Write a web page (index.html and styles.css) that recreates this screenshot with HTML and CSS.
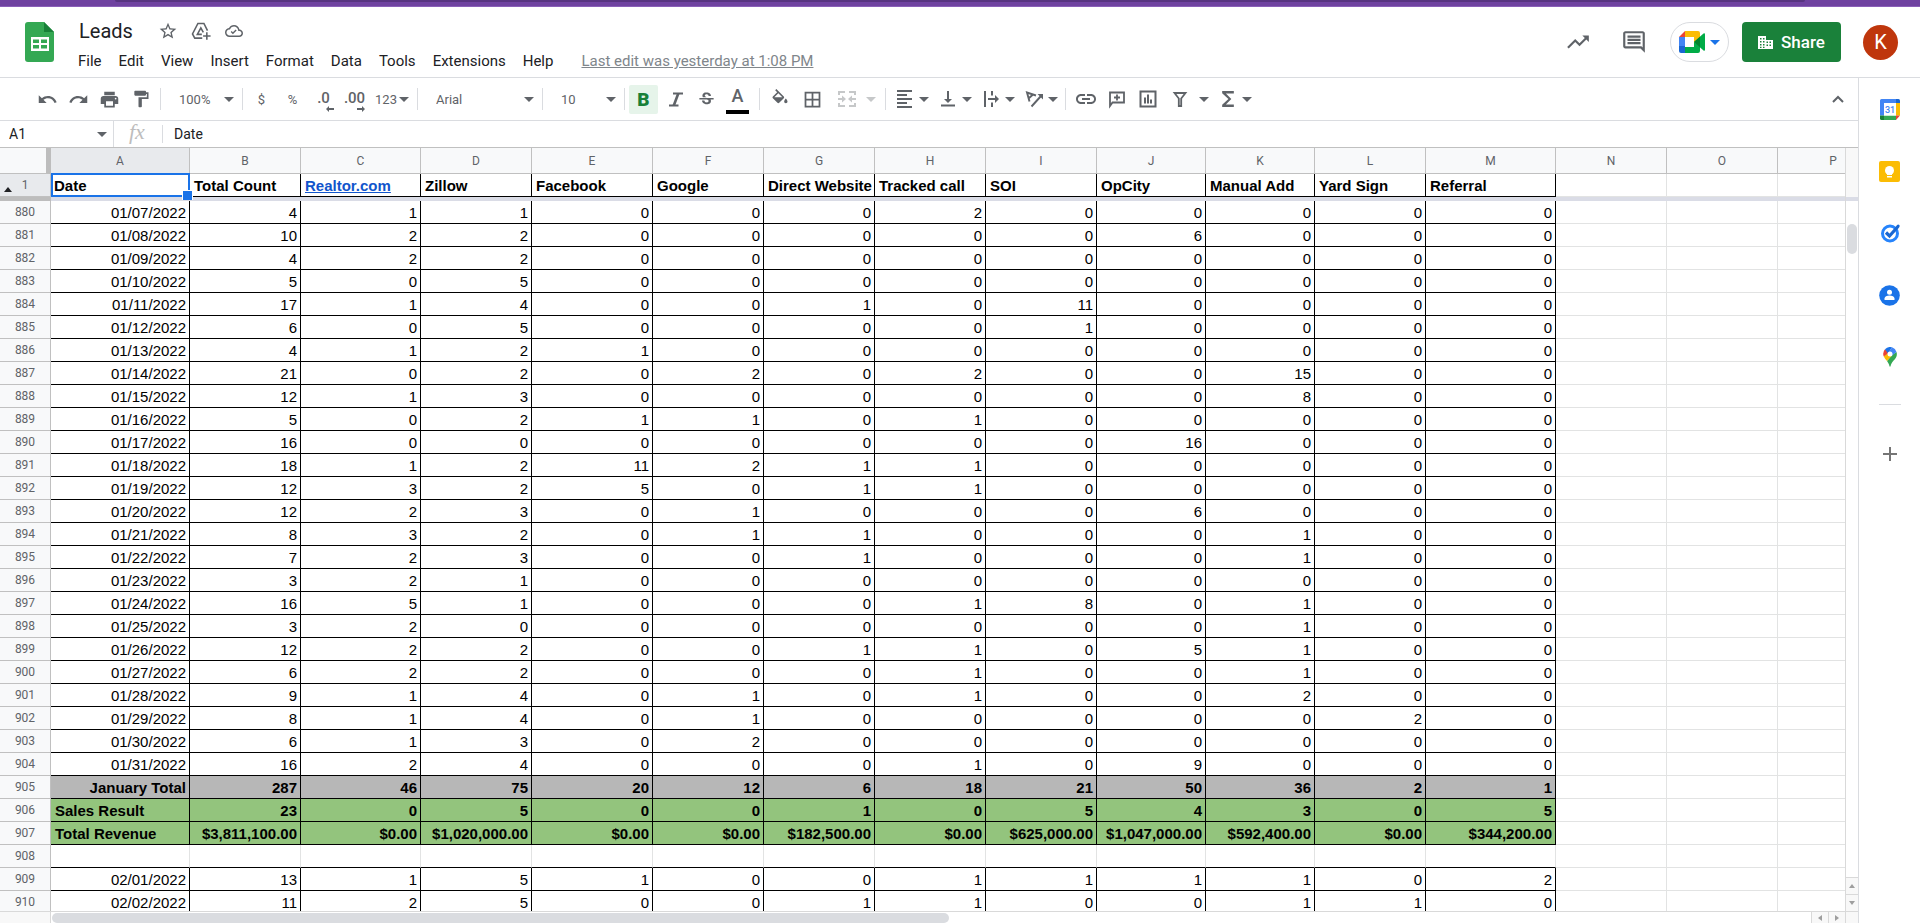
FILE: index.html
```html
<!DOCTYPE html>
<html lang="en">
<head>
<meta charset="utf-8">
<title>Leads</title>
<link rel="stylesheet" href="styles.css">
</head>
<body>
<svg class="defs" aria-hidden="true">
  <symbol id="caret" viewBox="0 0 10 5"><path d="M0 0h10L5 5z"/></symbol>
</svg>
<div class="window-strip"><div class="window-tab"></div></div>
<header class="header">
  <a class="logo" href="#" aria-label="Sheets home">
    <svg width="29" height="40" viewBox="0 0 29 40"><path fill="#34a853" d="M3 0h16l10 10v27a3 3 0 0 1-3 3H3a3 3 0 0 1-3-3V3a3 3 0 0 1 3-3z"/><path fill="#188038" d="M19 0l10 10H19z"/><path fill="#fff" fill-rule="evenodd" d="M6 15h18v14H6zM8 17.500v3.500h6v-3.500zM16 17.500v3.500h6v-3.500zM8 23v3.500h6V23zM16 23v3.500h6V23z"/></svg>
  </a>
  <div class="doc">
    <div class="doc-title">
      <h1>Leads</h1>
      <button class="doc-icon" aria-label="Star"><svg width="20" height="20" viewBox="0 0 24 24"><path d="M22 9.240l-7.190-.62L12 2 9.190 8.630 2 9.240l5.460 4.730L5.820 21 12 17.270 18.180 21l-1.630-7.030L22 9.240zM12 15.400l-3.760 2.270 1-4.280-3.320-2.880 4.380-.38L12 6.100l1.710 4.040 4.380.38-3.320 2.880 1 4.280L12 15.400z"/></svg></button>
      <button class="doc-icon" aria-label="Move"><svg width="20" height="20" viewBox="0 0 24 24" fill="none" stroke="#5f6368" stroke-width="1.900"><path d="M13.500 20.500H4.500L1.800 15.600 8.300 3h7.200l4.300 8.500"/><path d="M13 16H7.600l4.200-7.800 3 5.500M19 13.500v9M14.500 18h9"/></svg></button>
      <button class="doc-icon" aria-label="Saved to Drive"><svg width="18" height="18" viewBox="0 0 24 24"><path d="M19.350 10.040C18.670 6.590 15.640 4 12 4 9.110 4 6.600 5.640 5.350 8.040 2.340 8.360 0 10.910 0 14c0 3.310 2.690 6 6 6h13c2.760 0 5-2.240 5-5 0-2.640-2.050-4.780-4.650-4.960zM19 18H6c-2.210 0-4-1.790-4-4 0-2.050 1.530-3.760 3.560-3.970l1.070-.11.5-.95C8.080 7.140 9.940 6 12 6c2.620 0 4.880 1.860 5.390 4.430l.3 1.500 1.530.11c1.560.1 2.780 1.410 2.780 2.960 0 1.650-1.350 3-3 3zm-8.500-4.320l-1.600-1.600-1.300 1.300 2.900 2.900 5-5-1.300-1.300z"/></svg></button>
    </div>
    <nav class="menus" aria-label="Menu">
      <button>File</button><button>Edit</button><button>View</button><button>Insert</button><button>Format</button><button>Data</button><button>Tools</button><button>Extensions</button><button>Help</button>
      <a href="#">Last edit was yesterday at 1:08 PM</a>
    </nav>
  </div>
  <div class="actions">
    <button class="action-icon" aria-label="Activity"><svg width="26" height="26" viewBox="0 0 24 24"><path d="M16 6l2.290 2.290-4.880 4.880-4-4L2 16.590 3.410 18l6-6 4 4 6.300-6.290L22 12V6z"/></svg></button>
    <button class="action-icon" aria-label="Comments"><svg width="26" height="26" viewBox="0 0 24 24"><path d="M22 4c0-1.100-.9-2-2-2H4c-1.100 0-2 .9-2 2v12c0 1.100.9 2 2 2h14l4 4V4zM20 4v13.170L18.830 16H4V4zM6 12h12v2H6zm0-3h12v2H6zm0-3h12v2H6z"/></svg></button>
    <button class="meet" aria-label="Join a call">
      <svg width="26" height="22" viewBox="0 0 26 22"><path fill="#fff" d="M6 6h9v10H6z"/><path fill="#ea4335" d="M6 0v6H0z"/><path fill="#4285f4" d="M0 6h6v9H0z"/><path fill="#1967d2" d="M0 15h6v7H2a2 2 0 0 1-2-2z"/><path fill="#fbbc04" d="M6 0h13a2 2 0 0 1 2 2v5l-6 5V6H6z"/><path fill="#00ac47" d="M6 16h9v-5l6 4v5a2 2 0 0 1-2 2H6z"/><path fill="#00ac47" d="M15 11l9.500-8.500q1.500-.8 1.500.8v15.400q0 1.600-1.500.8z"/><path fill="#00832d" d="M15 11l6-5.300v10.600z"/></svg>
      <svg class="caret" width="10" height="5"><use href="#caret"/></svg>
    </button>
    <button class="share"><svg width="15" height="13" viewBox="0 0 15 13"><path fill="#fff" fill-rule="evenodd" d="M0 0h8v4h7v9H0zM2 2v1.500h1.500V2zM5 2v1.500h1.500V2zM2 5v1.500h1.500V5zM5 5v1.500h1.500V5zM2 8v1.500h1.500V8zM5 8v1.500h1.500V8zM8.500 5.500V7H10V5.500zM8.500 8.500V10H10V8.500zM11.500 5.500V7H13V5.500zM11.500 8.500V10H13V8.500zM2 10.700v1.300h1.500v-1.300zM5 10.700v1.300h1.500v-1.300z"/></svg>Share</button>
    <button class="avatar" aria-label="Account">K</button>
  </div>
</header>
<div class="body">
<main class="main">
  <div class="toolbar" role="toolbar" aria-label="Main">
    <div class="group first">
      <button class="tool" aria-label="Undo"><svg width="21" height="21" viewBox="0 0 24 24"><path d="M12.500 8c-2.650 0-5.050.99-6.900 2.600L2 7v9h9l-3.620-3.620c1.390-1.160 3.160-1.880 5.120-1.880 3.540 0 6.550 2.310 7.600 5.500l2.370-.78C21.080 11.030 17.150 8 12.500 8z"/></svg></button>
      <button class="tool" aria-label="Redo"><svg width="21" height="21" viewBox="0 0 24 24"><path d="M18.400 10.600C16.550 8.990 14.150 8 11.500 8c-4.650 0-8.580 3.030-9.960 7.220L3.900 16c1.050-3.190 4.050-5.500 7.600-5.500 1.950 0 3.730.72 5.120 1.880L13 16h9V7l-3.600 3.600z"/></svg></button>
      <button class="tool" aria-label="Print"><svg width="21" height="21" viewBox="0 0 24 24"><path d="M19 8H5c-1.660 0-3 1.340-3 3v6h4v4h12v-4h4v-6c0-1.660-1.340-3-3-3zm-3 11H8v-5h8v5zm3-7c-.55 0-1-.45-1-1s.45-1 1-1 1 .45 1 1-.45 1-1 1zm-1-9H6v4h12V3z"/></svg></button>
      <button class="tool" aria-label="Paint format"><svg width="20" height="20" viewBox="0 0 24 24"><path d="M18 4V3c0-.55-.45-1-1-1H5c-.55 0-1 .45-1 1v4c0 .55.45 1 1 1h12c.55 0 1-.45 1-1V6h1v4H9v11c0 .55.45 1 1 1h2c.55 0 1-.45 1-1v-9h8V4h-3z"/></svg></button>
    </div>
    <label class="pick pick-short"><select aria-label="Zoom"><option>100%</option></select><svg class="caret" width="10" height="5"><use href="#caret"/></svg></label>
    <div class="group">
      <button class="tool text">$</button>
      <button class="tool text">%</button>
      <button class="tool decimal">.0<svg width="8" height="6" viewBox="0 0 8 6"><path d="M0 3l3-3v2h5v2H3v2z"/></svg></button>
      <button class="tool decimal">.00<svg width="8" height="6" viewBox="0 0 8 6"><path d="M8 3L5 0v2H0v2h5v2z"/></svg></button>
      <button class="menu text">123<svg class="caret" width="10" height="5"><use href="#caret"/></svg></button>
    </div>
    <label class="pick pick-font"><select aria-label="Font"><option>Arial</option></select><svg class="caret" width="10" height="5"><use href="#caret"/></svg></label>
    <label class="pick pick-short"><select aria-label="Font size"><option>10</option></select><svg class="caret" width="10" height="5"><use href="#caret"/></svg></label>
    <div class="group styles">
      <button class="tool bold" aria-pressed="true">B</button>
      <button class="tool" aria-label="Italic"><svg width="20" height="20" viewBox="0 0 20 20" fill="none" stroke="#5f6368" stroke-width="2.200"><path d="M7 4.500h10M3 16.500h9.500"/><path stroke-width="2.600" d="M12.300 4.500l-4.500 12"/></svg></button>
      <button class="tool" aria-label="Strikethrough"><svg width="19" height="19" viewBox="0 0 24 24"><path d="M7.240 8.750c-.26-.48-.39-1.030-.39-1.670 0-.61.13-1.160.4-1.670.26-.5.63-.93 1.110-1.290.48-.35 1.050-.63 1.700-.83.66-.19 1.390-.29 2.180-.29.81 0 1.540.11 2.210.34.66.22 1.230.54 1.690.94.47.4.83.88 1.080 1.430.25.55.38 1.150.38 1.810h-3.010c0-.31-.05-.59-.15-.85-.09-.27-.24-.49-.44-.68-.2-.19-.45-.33-.75-.44-.3-.1-.66-.16-1.060-.16-.39 0-.74.04-1.030.13-.29.09-.53.21-.72.36-.19.16-.34.34-.44.55-.1.21-.15.43-.15.66 0 .48.25.88.74 1.210.38.25.77.48 1.410.7H7.390c-.05-.08-.11-.17-.15-.25zM21 12v-2H3v2h9.620c.18.07.4.14.55.2.37.17.66.34.87.51.21.17.35.36.43.57.07.2.11.43.11.69 0 .23-.05.45-.14.66-.09.2-.23.38-.42.53-.19.15-.42.26-.71.35-.29.08-.63.13-1.010.13-.43 0-.83-.04-1.180-.13s-.66-.23-.91-.42c-.25-.19-.45-.44-.59-.75-.14-.31-.25-.76-.25-1.210H6.400c0 .55.08 1.130.24 1.580.16.45.37.85.65 1.210.28.35.6.66.98.92.37.26.78.48 1.220.65.44.17.9.3 1.380.39.48.08.96.13 1.440.13.8 0 1.530-.09 2.180-.28s1.210-.45 1.670-.79c.46-.34.82-.77 1.070-1.270s.38-1.070.38-1.710c0-.6-.1-1.140-.31-1.610-.05-.11-.11-.23-.17-.33H21z"/></svg></button>
      <button class="tool color">A</button>
    </div>
    <div class="group cells">
      <button class="tool" aria-label="Fill color"><svg width="20" height="20" viewBox="0 0 24 24"><path d="M16.560 8.940L7.620 0 6.210 1.410l2.380 2.380-5.150 5.150c-.59.59-.59 1.540 0 2.120l5.500 5.500c.29.29.68.44 1.060.44s.77-.15 1.060-.44l5.500-5.500c.59-.58.59-1.530 0-2.120zM5.210 10L10 5.210 14.790 10H5.210zM19 11.500s-2 2.170-2 3.500c0 1.100.9 2 2 2s2-.9 2-2c0-1.330-2-3.500-2-3.500z"/></svg></button>
      <button class="tool" aria-label="Borders"><svg width="21" height="21" viewBox="0 0 24 24"><path d="M3 3v18h18V3H3zm8 16H5v-6h6v6zm0-8H5V5h6v6zm8 8h-6v-6h6v6zm0-8h-6V5h6v6z"/></svg></button>
      <button class="menu wide" disabled aria-label="Merge cells"><svg width="24" height="20" viewBox="0 0 24 20"><path fill="none" stroke="#5f6368" stroke-width="2" d="M4 6V3h6M14 3h6v3M4 14v3h6M14 17h6v-3M3 10h5M16 10h5"/><path d="M7 6.500l4 3.500-4 3.500zM17 6.500L13 10l4 3.500z"/></svg><svg class="caret" width="10" height="5"><use href="#caret"/></svg></button>
    </div>
    <div class="group aligns">
      <button class="menu" aria-label="Horizontal align"><svg width="24" height="20" viewBox="0 0 24 20"><path d="M4 2h15v2H4zM4 6h10v2H4zM4 10h15v2H4zM4 14h10v2H4zM4 18h15v2H4z" transform="translate(0 -1)"/></svg><svg class="caret" width="10" height="5"><use href="#caret"/></svg></button>
      <button class="menu" aria-label="Vertical align"><svg width="24" height="20" viewBox="0 0 24 20"><path d="M5 15.500h14v2H5zM11 2h2v8h3l-4 4-4-4h3z"/></svg><svg class="caret" width="10" height="5"><use href="#caret"/></svg></button>
      <button class="menu" aria-label="Text wrapping"><svg width="24" height="20" viewBox="0 0 24 20"><path d="M5 2h2v16H5zM12 2h2v4.500h-2zM12 13.500h2V18h-2zM9 9h7V6l4 4-4 4v-3H9z"/></svg><svg class="caret" width="10" height="5"><use href="#caret"/></svg></button>
      <button class="menu" aria-label="Text rotation"><svg width="24" height="20" viewBox="0 0 24 20" fill="none" stroke="#5f6368" stroke-width="1.900"><path d="M7.500 12.500L5 3.500l9 3M6.500 9.500l4.500-4M9.500 17.500L19 7"/><path fill="#5f6368" stroke="none" d="M15.500 5H21v5.500z"/></svg><svg class="caret" width="10" height="5"><use href="#caret"/></svg></button>
    </div>
    <div class="group last">
      <button class="tool" aria-label="Insert link"><svg width="24" height="24" viewBox="0 0 24 24"><path d="M3.900 12c0-1.710 1.390-3.100 3.100-3.100h4V7H7c-2.760 0-5 2.240-5 5s2.240 5 5 5h4v-1.900H7c-1.710 0-3.100-1.390-3.100-3.100zM8 13h8v-2H8v2zm9-6h-4v1.900h4c1.710 0 3.100 1.390 3.100 3.100s-1.390 3.100-3.100 3.100h-4V17h4c2.760 0 5-2.240 5-5s-2.240-5-5-5z"/></svg></button>
      <button class="tool" aria-label="Insert comment"><svg width="20" height="20" viewBox="0 0 20 20" fill="none" stroke="#5f6368" stroke-width="1.800"><path d="M3 17V3.500h14v10H5.500zM10 5.500v6M7 8.500h6"/></svg></button>
      <button class="tool" aria-label="Insert chart"><svg width="20" height="20" viewBox="0 0 20 20"><path fill="none" stroke="#5f6368" stroke-width="2" d="M2.500 2.500h15v15h-15z"/><path d="M6 8.500h2v6H6zM9 5.500h2v9H9zM12 10.500h2v4h-2z"/></svg></button>
      <button class="menu wide" aria-label="Filter"><svg width="24" height="20" viewBox="0 0 24 20" fill="none" stroke="#5f6368" stroke-width="1.800"><path d="M6.500 4h11L13.200 9.500V17h-2.400V9.500z"/></svg><svg class="caret" width="10" height="5"><use href="#caret"/></svg></button>
      <button class="menu" aria-label="Functions"><svg width="24" height="20" viewBox="0 0 24 24"><path d="M19 2.500H5V5l7.500 7L5 19v2.500h14v-3h-9.500l6.500-6.500L9.500 5.500H19z"/></svg><svg class="caret" width="10" height="5"><use href="#caret"/></svg></button>
    </div>
    <button class="collapse" aria-label="Hide the menus"><svg width="12" height="8" viewBox="0 0 12 8"><path fill="none" stroke="#5f6368" stroke-width="2" d="M1 7l5-5 5 5"/></svg></button>
  </div>
  <div class="formula-bar">
    <div class="name-box"><input type="text" value="A1" aria-label="Name box"><svg class="caret" width="10" height="5"><use href="#caret"/></svg></div>
    <span class="fx">fx</span>
    <input class="formula" type="text" value="Date" aria-label="Formula">
  </div>
  <div class="sheet">
    <div class="grid">
      <table>
        <colgroup><col class="c51"><col class="c139"><col class="c111"><col class="c120"><col class="c111"><col class="c121"><col class="c111"><col class="c111"><col class="c111"><col class="c111"><col class="c109"><col class="c109"><col class="c111"><col class="c130"><col class="c111"><col class="c111"><col class="c111"></colgroup>
        <thead>
          <tr class="letters"><th class="corner"><th class="active">A<th>B<th>C<th>D<th>E<th>F<th>G<th>H<th>I<th>J<th>K<th>L<th>M<th>N<th>O<th>P
        <tbody class="frozen">
          <tr class="titles"><th class="active"><span class="marker"></span>1<td class="selected">Date<td>Total Count<td><a href="#">Realtor.com</a><td>Zillow<td>Facebook<td>Google<td>Direct Website<td>Tracked call<td>SOI<td>OpCity<td>Manual Add<td>Yard Sign<td>Referral<td><td><td>
          <tr class="freeze"><th><td colspan="16">
        <tbody>
          <tr><th>880<td>01/07/2022<td>4<td>1<td>1<td>0<td>0<td>0<td>2<td>0<td>0<td>0<td>0<td>0<td><td><td>
          <tr><th>881<td>01/08/2022<td>10<td>2<td>2<td>0<td>0<td>0<td>0<td>0<td>6<td>0<td>0<td>0<td><td><td>
          <tr><th>882<td>01/09/2022<td>4<td>2<td>2<td>0<td>0<td>0<td>0<td>0<td>0<td>0<td>0<td>0<td><td><td>
          <tr><th>883<td>01/10/2022<td>5<td>0<td>5<td>0<td>0<td>0<td>0<td>0<td>0<td>0<td>0<td>0<td><td><td>
          <tr><th>884<td>01/11/2022<td>17<td>1<td>4<td>0<td>0<td>1<td>0<td>11<td>0<td>0<td>0<td>0<td><td><td>
          <tr><th>885<td>01/12/2022<td>6<td>0<td>5<td>0<td>0<td>0<td>0<td>1<td>0<td>0<td>0<td>0<td><td><td>
          <tr><th>886<td>01/13/2022<td>4<td>1<td>2<td>1<td>0<td>0<td>0<td>0<td>0<td>0<td>0<td>0<td><td><td>
          <tr><th>887<td>01/14/2022<td>21<td>0<td>2<td>0<td>2<td>0<td>2<td>0<td>0<td>15<td>0<td>0<td><td><td>
          <tr><th>888<td>01/15/2022<td>12<td>1<td>3<td>0<td>0<td>0<td>0<td>0<td>0<td>8<td>0<td>0<td><td><td>
          <tr><th>889<td>01/16/2022<td>5<td>0<td>2<td>1<td>1<td>0<td>1<td>0<td>0<td>0<td>0<td>0<td><td><td>
          <tr><th>890<td>01/17/2022<td>16<td>0<td>0<td>0<td>0<td>0<td>0<td>0<td>16<td>0<td>0<td>0<td><td><td>
          <tr><th>891<td>01/18/2022<td>18<td>1<td>2<td>11<td>2<td>1<td>1<td>0<td>0<td>0<td>0<td>0<td><td><td>
          <tr><th>892<td>01/19/2022<td>12<td>3<td>2<td>5<td>0<td>1<td>1<td>0<td>0<td>0<td>0<td>0<td><td><td>
          <tr><th>893<td>01/20/2022<td>12<td>2<td>3<td>0<td>1<td>0<td>0<td>0<td>6<td>0<td>0<td>0<td><td><td>
          <tr><th>894<td>01/21/2022<td>8<td>3<td>2<td>0<td>1<td>1<td>0<td>0<td>0<td>1<td>0<td>0<td><td><td>
          <tr><th>895<td>01/22/2022<td>7<td>2<td>3<td>0<td>0<td>1<td>0<td>0<td>0<td>1<td>0<td>0<td><td><td>
          <tr><th>896<td>01/23/2022<td>3<td>2<td>1<td>0<td>0<td>0<td>0<td>0<td>0<td>0<td>0<td>0<td><td><td>
          <tr><th>897<td>01/24/2022<td>16<td>5<td>1<td>0<td>0<td>0<td>1<td>8<td>0<td>1<td>0<td>0<td><td><td>
          <tr><th>898<td>01/25/2022<td>3<td>2<td>0<td>0<td>0<td>0<td>0<td>0<td>0<td>1<td>0<td>0<td><td><td>
          <tr><th>899<td>01/26/2022<td>12<td>2<td>2<td>0<td>0<td>1<td>1<td>0<td>5<td>1<td>0<td>0<td><td><td>
          <tr><th>900<td>01/27/2022<td>6<td>2<td>2<td>0<td>0<td>0<td>1<td>0<td>0<td>1<td>0<td>0<td><td><td>
          <tr><th>901<td>01/28/2022<td>9<td>1<td>4<td>0<td>1<td>0<td>1<td>0<td>0<td>2<td>0<td>0<td><td><td>
          <tr><th>902<td>01/29/2022<td>8<td>1<td>4<td>0<td>1<td>0<td>0<td>0<td>0<td>0<td>2<td>0<td><td><td>
          <tr><th>903<td>01/30/2022<td>6<td>1<td>3<td>0<td>2<td>0<td>0<td>0<td>0<td>0<td>0<td>0<td><td><td>
          <tr><th>904<td>01/31/2022<td>16<td>2<td>4<td>0<td>0<td>0<td>1<td>0<td>9<td>0<td>0<td>0<td><td><td>
          <tr class="total"><th>905<td>January Total<td>287<td>46<td>75<td>20<td>12<td>6<td>18<td>21<td>50<td>36<td>2<td>1<td><td><td>
          <tr class="result"><th>906<td>Sales Result<td>23<td>0<td>5<td>0<td>0<td>1<td>0<td>5<td>4<td>3<td>0<td>5<td><td><td>
          <tr class="result"><th>907<td>Total Revenue<td>$3,811,100.00<td>$0.00<td>$1,020,000.00<td>$0.00<td>$0.00<td>$182,500.00<td>$0.00<td>$625,000.00<td>$1,047,000.00<td>$592,400.00<td>$0.00<td>$344,200.00<td><td><td>
          <tr class="blank"><th>908<td><td><td><td><td><td><td><td><td><td><td><td><td><td><td><td>
          <tr><th>909<td>02/01/2022<td>13<td>1<td>5<td>1<td>0<td>0<td>1<td>1<td>1<td>1<td>0<td>2<td><td><td>
          <tr><th>910<td>02/02/2022<td>11<td>2<td>5<td>0<td>0<td>1<td>1<td>0<td>0<td>1<td>1<td>0<td><td><td>
      </table>
    </div>
    <div class="vscroll">
      <div class="vscroll-head"></div>
      <div class="vscroll-track"><div class="vthumb"></div></div>
      <button aria-label="Scroll up"><svg width="6" height="4" viewBox="0 0 6 4"><path d="M3 0l3 4H0z"/></svg></button>
      <button aria-label="Scroll down"><svg width="6" height="4" viewBox="0 0 6 4"><path d="M0 0h6L3 4z"/></svg></button>
    </div>
    <div class="hscroll">
      <div class="hscroll-head"></div>
      <div class="hscroll-track"><div class="hthumb"></div></div>
      <button aria-label="Scroll left"><svg width="4" height="6" viewBox="0 0 4 6"><path d="M4 0v6L0 3z"/></svg></button>
      <button aria-label="Scroll right"><svg width="4" height="6" viewBox="0 0 4 6"><path d="M0 0l4 3-4 3z"/></svg></button>
    </div>
    <div class="scroll-corner"></div>
  </div>
</main>
<aside class="side" aria-label="Side panel">
  <button aria-label="Calendar"><svg width="20" height="21" viewBox="0 0 20 21"><path fill="#4285f4" d="M1.500 0H16v4H4v12.500H0v-15A1.500 1.500 0 0 1 1.500 0z"/><path fill="#1967d2" d="M16 0h2.500A1.500 1.500 0 0 1 20 1.500V4h-4z"/><path fill="#fbbc04" d="M16 4h4v12.500h-4z"/><path fill="#34a853" d="M4 16.500h12V21H4z"/><path fill="#188038" d="M0 16.500h4V21H1.500A1.500 1.500 0 0 1 0 19.500z"/><path fill="#ea4335" d="M16 16.500h4L16 21z"/><path fill="#fff" d="M4 4h12v12.500H4z"/><text x="10" y="14" text-anchor="middle" class="cal-day">31</text></svg></button>
  <button aria-label="Keep"><svg width="21" height="21" viewBox="0 0 21 21"><rect width="21" height="21" rx="2" fill="#fbbc04"/><circle cx="10.500" cy="9.500" r="4.500" fill="#fff"/><path fill="#fff" d="M8 11h5v3H8zM8 15h5v1.500H8z"/></svg></button>
  <button aria-label="Tasks"><svg width="20" height="20" viewBox="0 0 20 20" fill="none"><circle cx="10" cy="10.500" r="7.500" stroke="#2684fc" stroke-width="3"/><path stroke="#1967d2" stroke-width="3.200" d="M6 9.500l3.500 3.500L18 3.500"/><circle cx="18.200" cy="3" r="1.500" fill="#1967d2"/></svg></button>
  <button aria-label="Contacts"><svg width="21" height="21" viewBox="0 0 21 21"><circle cx="10.500" cy="10.500" r="10.300" fill="#1a73e8"/><circle cx="10.500" cy="7.300" r="2.500" fill="#fff"/><path fill="#fff" d="M5.500 15v-1.500c0-4 10-4 10 0V15z"/></svg></button>
  <button aria-label="Maps"><svg width="14" height="20" viewBox="0 0 14 20"><path fill="#34a853" d="M13.500 5A7 7 0 0 1 13 10.500C11.500 13.500 8.500 14.500 7.500 19.500h-1C6.200 17 5 15.500 4 14L9 8z"/><path fill="#fbbc04" d="M4 14C2.500 12.200 1.500 11 .8 9.500L5 5.500 9 8.500z"/><path fill="#ea4335" d="M.8 9.500A7 7 0 0 1 2 2.200L6 5.500z"/><path fill="#1a73e8" d="M2 2.200A7 7 0 0 1 9 .3L5 6.500z"/><path fill="#4285f4" d="M9 .3A7 7 0 0 1 13.500 5L8.500 9 5 6z"/><circle cx="7" cy="7" r="2.500" fill="#fff"/></svg></button>
  <hr>
  <button aria-label="Get add-ons"><svg width="14" height="14" viewBox="0 0 14 14"><path fill="#757575" d="M6 0h2v6h6v2H8v6H6V8H0V6h6z"/></svg></button>
</aside>
</div>
</body>
</html>
```
FILE: styles.css
```css
* { box-sizing: border-box; }

body {
  margin: 0;
  height: 100vh;
  display: flex;
  flex-direction: column;
  overflow: hidden;
  background: #fff;
  color: #202124;
  font-family: Roboto, sans-serif;
}

button {
  border: 0;
  padding: 0;
  background: none;
  color: inherit;
  font: inherit;
  display: flex;
  align-items: center;
  justify-content: center;
}

svg { flex: none; }
svg:not([fill]) { fill: #5f6368; }
.defs { display: none; }

/* window edge */
.window-strip {
  flex: none;
  height: 7px;
  padding: 0 115px;
  background: #6f42a0;
  border-bottom: 1px solid #8a5fb8;
}
.window-tab {
  height: 2px;
  background: #573480;
  border-radius: 0 0 8px 8px;
}

/* header */
.header {
  flex: none;
  display: flex;
  height: 71px;
  border-bottom: 1px solid #dadce0;
}
.logo { padding: 15px 0 0 25px; }
.doc { margin-left: 18px; padding-top: 11px; }
.doc-title {
  display: flex;
  align-items: center;
  gap: 13px;
  height: 26px;
  padding-left: 7px;
}
.doc-title h1 {
  margin: 0 12px 0 0;
  font-size: 20px;
  line-height: 26px;
  font-weight: 400;
}
.doc-icon { width: 20px; }
.menus {
  display: flex;
  align-items: center;
  gap: 2px;
  height: 34px;
  padding-left: 6px;
  font-size: 15px;
}
.menus button { padding: 0 8px 0 7px; height: 24px; }
.menus button:first-child { padding-left: 0; }
.menus a { margin-left: 18px; color: #80868b; }

.actions {
  margin-left: auto;
  display: flex;
  align-items: center;
  padding-right: 22px;
}
.action-icon { width: 26px; margin-right: 30px; }
.action-icon + .action-icon { margin-right: 23px; }
.meet {
  width: 59px;
  height: 40px;
  gap: 5px;
  border: 1px solid #dadce0;
  border-radius: 20px;
}
.meet .caret { fill: #1a73e8; }
.share {
  width: 99px;
  height: 40px;
  margin: 0 22px 0 13px;
  gap: 8px;
  border-radius: 4px;
  background: #1a813a;
  color: #fff;
  font-size: 17px;
  font-weight: 500;
}
.avatar {
  width: 35px;
  height: 35px;
  border-radius: 50%;
  background: #bf360c;
  color: #fff;
  font-size: 20px;
}

.body { flex: 1; min-height: 0; display: flex; }
.main { flex: 1; min-width: 0; display: flex; flex-direction: column; }

/* toolbar */
.toolbar {
  flex: none;
  display: flex;
  align-items: center;
  height: 43px;
  border-bottom: 1px solid #dadce0;
  color: #5f6368;
  font-size: 13px;
}
.group {
  display: flex;
  align-items: center;
  height: 22px;
  padding: 0 3px;
  border-right: 1px solid #dadce0;
}
.group.first { padding: 0 4px 0 32px; }
.group.styles { padding: 0 6px 0 4px; }
.group.cells { padding: 0 5px 0 4px; gap: 2px; }
.group.aligns { padding: 0 4px; gap: 1px; }
.group.last { padding-left: 4px; border: 0; }
.tool { width: 31px; height: 29px; }
.menu { height: 29px; padding: 0 3px; gap: 2px; }
.menu.wide { padding: 0 4px 0 5px; gap: 7px; }
.menu.text { width: 44px; }
.menu:disabled { opacity: 0.35; }
.bold {
  width: 29px;
  margin-right: 2px;
  border-radius: 2px;
  background: #e6f4ea;
  color: #188038;
  font-size: 19px;
  font-weight: 900;
}
.color {
  width: 23px;
  margin: 0 4px;
  padding-bottom: 2px;
  border-bottom: 4px solid #000;
  font-size: 18px;
  font-weight: 500;
  line-height: 20px;
}
.decimal {
  flex-direction: column;
  align-items: center;
  padding-top: 4px;
  font-size: 15px;
  font-weight: 500;
  line-height: 16px;
}
.decimal svg { align-self: flex-end; margin-right: 5px; }
.pick {
  display: flex;
  align-items: center;
  height: 22px;
  padding: 0 8px 0 18px;
  border-right: 1px solid #dadce0;
}
.pick-short { width: 82px; }
.pick-font { width: 125px; }
.pick select {
  flex: 1;
  min-width: 0;
  appearance: none;
  padding: 0;
  border: 0;
  background: none;
  color: inherit;
  font: inherit;
}
.collapse { width: 30px; height: 29px; margin: 0 5px 0 auto; }

/* formula bar */
.formula-bar {
  flex: none;
  display: flex;
  align-items: center;
  height: 27px;
  border-bottom: 1px solid #c0c0c0;
}
.formula-bar input {
  min-width: 0;
  border: 0;
  padding: 0;
  background: none;
  color: #202124;
  font: 14px Roboto, sans-serif;
}
.name-box {
  display: flex;
  align-items: center;
  width: 114px;
  height: 26px;
  padding: 0 6px 0 9px;
  border-right: 1px solid #dadce0;
}
.name-box input { flex: 1; }
.fx {
  width: 49px;
  height: 18px;
  padding-left: 15px;
  border-right: 1px solid #dadce0;
  color: #bdbdbd;
  font: italic 22px/14px "Liberation Serif", serif;
}
.formula-bar .formula { flex: 1; margin-left: 11px; }

/* sheet */
.sheet {
  flex: 1;
  min-height: 0;
  display: grid;
  grid-template-columns: minmax(0, 1fr) 13px;
  grid-template-rows: minmax(0, 1fr) 12px;
}
.grid { overflow: hidden; }
table {
  width: 1889px;
  table-layout: fixed;
  border-collapse: separate;
  border-spacing: 0;
}
.c51 { width: 51px; }
.c109 { width: 109px; }
.c111 { width: 111px; }
.c120 { width: 120px; }
.c121 { width: 121px; }
.c130 { width: 130px; }
.c139 { width: 139px; }

th, td {
  height: 23px;
  padding: 0;
  border: solid #e2e3e3;
  border-width: 0 1px 1px 0;
  line-height: 22px;
  white-space: nowrap;
}
th {
  background: #f8f9fa;
  border-color: #c0c0c0;
  color: #5f6368;
  font-size: 12px;
  font-weight: 400;
}
.letters th { height: 26px; padding-top: 2px; line-height: 23px; }
.letters .corner { border-right: 5px solid #bdbdbd; }
th.active { background: #e8eaed; position: relative; }
.marker {
  position: absolute;
  left: 4px;
  bottom: 4px;
  border: solid transparent;
  border-width: 0 4px 5px;
  border-bottom-color: #202124;
}
td {
  padding: 2px 3px 0;
  color: #000;
  font-family: "Liberation Sans", Arial, sans-serif;
  font-size: 15px;
  line-height: 20px;
  text-align: right;
}
td:nth-child(-n+14) { border-color: #000; }
.titles td { padding-left: 4px; padding-right: 0; font-weight: 700; text-align: left; }
.titles a { color: #1155cc; }
.titles .selected { position: relative; z-index: 1; padding-left: 3px; }
.selected::before {
  content: "";
  position: absolute;
  inset: -1px -1px -1px 0;
  border: 2px solid #1a73e8;
}
.selected::after {
  content: "";
  position: absolute;
  right: -4px;
  bottom: -4px;
  width: 9px;
  height: 9px;
  border: solid #fff;
  border-width: 1px 1px 0 1px;
  background: #1a73e8;
}
.freeze th, .freeze td {
  height: 4px;
  padding: 0;
  border: 0;
  line-height: 0;
  background: #dadce6;
}
.freeze th { background: #bdbdbd; }
.total td, .result td { font-weight: 700; }
.total td:nth-child(-n+14) { background: #b7b7b7; }
.result td:nth-child(-n+14) { background: #93c47d; }
.result td:nth-child(2) { text-align: left; padding-left: 4px; }
.blank td:nth-child(-n+14) { border-right-color: #e2e3e3; }

/* scrollbars */
.vscroll {
  display: flex;
  flex-direction: column;
  border-left: 1px solid #d9d9d9;
}
.vscroll-head {
  height: 53px;
  border-bottom: 4px solid #dadce6;
  background: #f8f8f8;
}
.vscroll-track { flex: 1; padding: 23px 1px 0; }
.vthumb { height: 30px; border-radius: 5px; background: #dadce0; }
.vscroll button {
  height: 17px;
  border-top: 1px solid #d9d9d9;
  background: #f8f8f8;
}
.vscroll svg, .hscroll svg { fill: #9e9e9e; }
.hscroll {
  display: flex;
  border-top: 1px solid #d9d9d9;
}
.hscroll-head {
  width: 51px;
  border-right: 1px solid #d9d9d9;
  background: #f8f8f8;
}
.hscroll-track { flex: 1; padding: 1px 0 0 1px; }
.hthumb { width: 51%; height: 10px; border-radius: 5px; background: #dadce0; }
.hscroll button {
  width: 17px;
  border-left: 1px solid #d9d9d9;
  background: #f8f8f8;
}
.scroll-corner {
  border: solid #d9d9d9;
  border-width: 1px 0 0 1px;
  background: #f8f8f8;
}

/* side panel */
.side {
  flex: none;
  width: 62px;
  border-left: 1px solid #dadce0;
  display: flex;
  flex-direction: column;
  align-items: center;
}
.side button { width: 61px; height: 62px; }
.side hr {
  width: 22px;
  margin: 16px 0 18px;
  border: 0;
  border-top: 1px solid #dadce0;
}
.cal-day { fill: #4285f4; font: 500 9px Roboto, sans-serif; }
```
